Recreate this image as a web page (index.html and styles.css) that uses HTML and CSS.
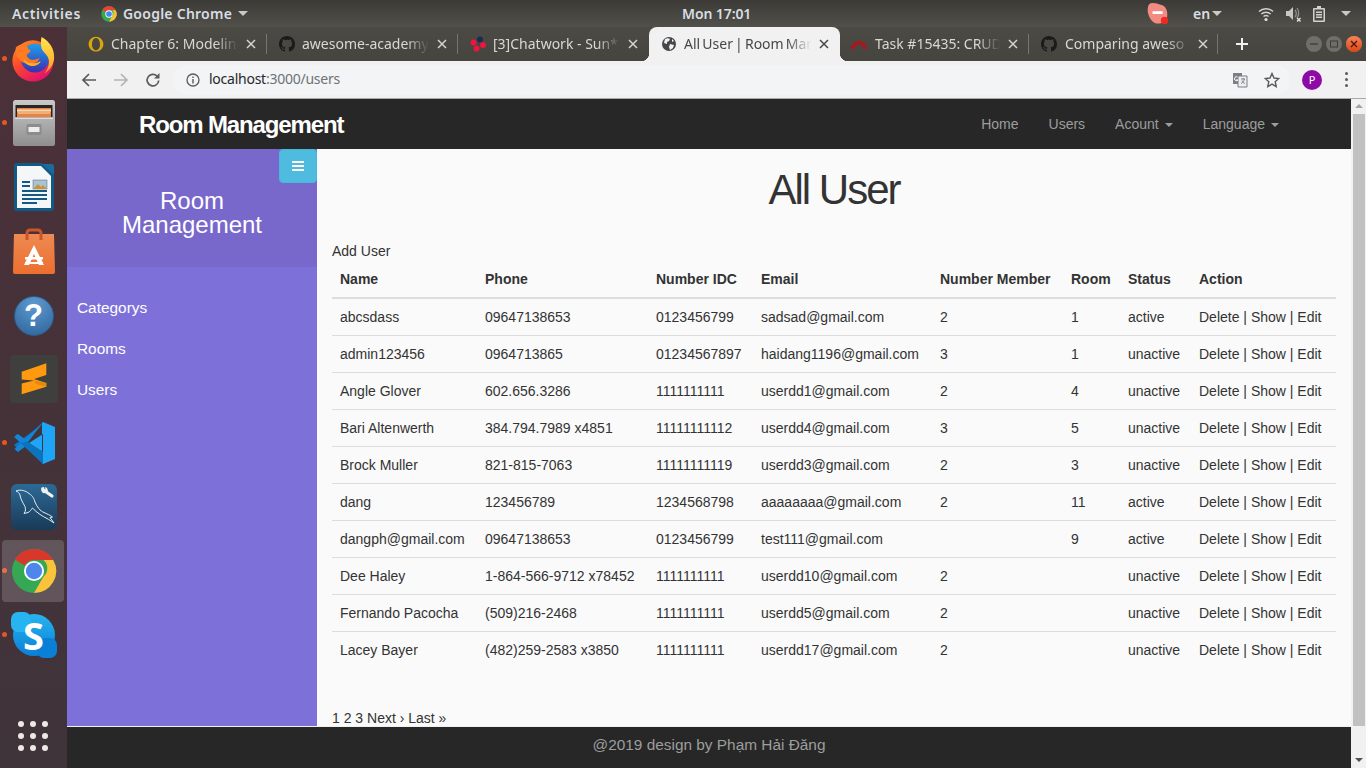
FILE: index.html
```html
<!DOCTYPE html>
<html lang="en">
<head>
<meta charset="utf-8">
<title>All User | Room Management</title>
<link rel="stylesheet" href="styles.css">
</head>
<body>
<svg class="defs" width="0" height="0" aria-hidden="true">
  <defs>
    <symbol id="gh" viewBox="0 0 16 16"><path fill="#1b1b1b" d="M8 0C3.58 0 0 3.58 0 8c0 3.54 2.29 6.53 5.47 7.59.4.07.55-.17.55-.38 0-.19-.01-.82-.01-1.49-2.01.37-2.53-.49-2.69-.94-.09-.23-.48-.94-.82-1.13-.28-.15-.68-.52-.01-.53.63-.01 1.08.58 1.23.82.72 1.21 1.87.87 2.33.66.07-.52.28-.87.51-1.07-1.78-.2-3.64-.89-3.64-3.95 0-.87.31-1.59.82-2.15-.08-.2-.36-1.02.08-2.12 0 0 .67-.21 2.2.82.64-.18 1.32-.27 2-.27.68 0 1.36.09 2 .27 1.53-1.04 2.2-.82 2.2-.82.44 1.1.16 1.92.08 2.12.51.56.82 1.27.82 2.15 0 3.07-1.87 3.75-3.65 3.95.29.25.54.73.54 1.48 0 1.07-.01 1.93-.01 2.2 0 .21.15.46.55.38A8.013 8.013 0 0016 8c0-4.42-3.58-8-8-8z"/></symbol>
    <symbol id="x" viewBox="0 0 10 10"><path d="M1 1l8 8M9 1l-8 8" stroke="currentColor" stroke-width="1.5" fill="none"/></symbol>
    <linearGradient id="ffo" x1="0" y1="0" x2="0.6" y2="1"><stop offset="0" stop-color="#ff9a1f"/><stop offset=".5" stop-color="#ff4a2a"/><stop offset="1" stop-color="#e3136c"/></linearGradient>
    <linearGradient id="ffy" x1="0" y1="0" x2="0" y2="1"><stop offset="0" stop-color="#ffe94f"/><stop offset="1" stop-color="#ff9a1f"/></linearGradient>
    <linearGradient id="ffb" x1="0" y1="0" x2="0" y2="1"><stop offset="0" stop-color="#1f9fe8"/><stop offset="1" stop-color="#3b2fb0"/></linearGradient>
    <linearGradient id="drw" x1="0" y1="0" x2="0" y2="1"><stop offset="0" stop-color="#c9c9c9"/><stop offset="1" stop-color="#8f8f8f"/></linearGradient>
    <linearGradient id="bag" x1="0" y1="0" x2="0" y2="1"><stop offset="0" stop-color="#ee8a52"/><stop offset="1" stop-color="#ec6f2f"/></linearGradient>
    <linearGradient id="wb" x1="0" y1="0" x2="0" y2="1"><stop offset="0" stop-color="#2c6a96"/><stop offset="1" stop-color="#1a3a58"/></linearGradient>
    <linearGradient id="cls" x1="0" y1="0" x2="0" y2="1"><stop offset="0" stop-color="#f9835a"/><stop offset="1" stop-color="#dd4514"/></linearGradient>
  </defs>
</svg>

<header class="topbar">
  <div class="tb-left">
    <span class="tb-item tb-act">Activities</span>
    <span class="tb-app">
      <svg class="tb-chrome" viewBox="0 0 48 48"><circle cx="24" cy="24" r="23" fill="#35a853"/><path d="M24 1a23 23 0 0 1 20 11.500H24a11.500 11.500 0 0 0-10 5.800L4 12A23 23 0 0 1 24 1z" fill="#ea4335"/><path d="M44 12.500a23 23 0 0 1-20 34.500l10-17.300a11.500 11.500 0 0 0 0-17.200z" fill="#fbc02d"/><circle cx="24" cy="24" r="11" fill="#fff"/><circle cx="24" cy="24" r="8.500" fill="#4285f4"/></svg>
      <span class="tb-item">Google Chrome</span>
      <i class="caret-w"></i>
    </span>
  </div>
  <div class="tb-clock">Mon 17:01</div>
  <div class="tb-right">
    <svg class="st-skype" viewBox="0 0 26 26"><path d="M6 1c4 0 6 1 9 2 5 1 7 6 7 10 0 5-1 9-7 10-4 1-8 0-10-3C2 16 0 11 1 6c0-3 2-5 5-5z" fill="#f28b82"/><rect x="6" y="10" width="11" height="3" fill="#fff"/><circle cx="19" cy="20" r="4" fill="#ee2a24"/></svg>
    <span class="st-lang">en</span><i class="caret-w st-caret1"></i>
    <svg class="st-ico st-wifi" viewBox="0 0 16 16"><path d="M1 5.500a10 10 0 0 1 14 0M3.300 8a7 7 0 0 1 9.400 0M5.500 10.500a4 4 0 0 1 5 0" stroke="#d3d2cf" stroke-width="1.500" fill="none"/><circle cx="8" cy="13.500" r="1.600" fill="#e4e3e0"/></svg>
    <svg class="st-ico st-vol" viewBox="0 0 16 16"><path d="M1 5h3l4-4v13l-4-4H1z" fill="#c8c7c4"/><path d="M10 4c1.500 2 1.500 5 0 7M12 2c2 3 2 7 0 10" stroke="#8f8e8a" stroke-width="1.300" fill="none"/><path d="M12 12l3.500 3.500M15.500 12L12 15.500" stroke="#e4e3e0" stroke-width="1.300"/></svg>
    <svg class="st-ico st-bat" viewBox="0 0 12 16"><path d="M4 0h4v2h3a1 1 0 0 1 1 1v12a1 1 0 0 1-1 1H1a1 1 0 0 1-1-1V3a1 1 0 0 1 1-1h3z" fill="#d3d2cf"/><path d="M1.500 3.500h9v11h-9z" fill="#4b4a44"/><path d="M3 5.500h6v1.500H3zM3 8h6v1.500H3zM3 10.500h6V12H3z" fill="#d3d2cf"/></svg>
    <i class="caret-w st-caret2"></i>
  </div>
</header>

<div class="desk">
  <nav class="dock">
    <div class="dock-item running">
      <svg class="d-ff" viewBox="0 0 48 48">
        <circle cx="24" cy="26" r="21.500" fill="url(#ffo)"/>
        <circle cx="26" cy="23" r="15" fill="url(#ffb)"/>
        <path d="M33 1c8 4 14 13 13 23-1 7-5 12-10 15 5-6 6-13 3-18-2-3-5-5-6-8-1-4-1-8 0-12z" fill="url(#ffy)"/>
        <path d="M6 12c3-3 8-4 11-2 2 1 1 4 3 4s2 3-1 4c-2 1-2 3 0 5 3 3 8 2 12 0-2 5-8 8-14 6-8-2-12-9-11-17z" fill="#ff7a22"/>
        <path d="M14 24c4 5 12 6 18 2-1 4-7 6-11 5-4-1-6-4-7-7z" fill="#ffb020"/>
      </svg>
    </div>
    <div class="dock-item running">
      <svg class="d-files" viewBox="0 0 42 46">
        <rect x="0" y="0" width="42" height="46" rx="2.500" fill="url(#drw)"/>
        <rect x="2.500" y="5" width="37" height="12" fill="#2a2523"/>
        <rect x="4" y="8" width="34" height="9" fill="#e8843e"/>
        <rect x="4" y="9.500" width="34" height="2" fill="#f6d9b8"/>
        <rect x="5" y="12.500" width="32" height="1" fill="#f6d9b8"/>
        <rect x="2" y="18" width="38" height="1" fill="#dcdcdc"/>
        <rect x="13.500" y="24" width="15" height="11" rx="1.500" fill="#8c8c8c"/>
        <rect x="15.500" y="27" width="11" height="5" fill="#eeeeee"/>
      </svg>
    </div>
    <div class="dock-item">
      <svg class="d-writer" viewBox="0 0 40 48">
        <path d="M2 0h26l12 12v33a3 3 0 0 1-3 3H3a3 3 0 0 1-3-3V2a2 2 0 0 1 2-2z" fill="#0f5a86"/>
        <path d="M3 3h24l10 10v32H3z" fill="#f4f6f8"/>
        <path d="M28 1h10a2 2 0 0 1 2 2v9z" fill="#1b6c9e"/>
        <path d="M8 18h8v2H8zM8 22h8v2H8zM8 27h25v2H8zM8 31h25v2H8zM8 35h25v2H8zM8 39h15v2H8z" fill="#125a85"/>
        <rect x="19" y="17" width="14" height="9" fill="#a8c2d6" stroke="#567" stroke-width=".5"/>
        <path d="M19 26l5-5 3 3 2-2 4 4z" fill="#c9962e"/>
      </svg>
    </div>
    <div class="dock-item">
      <svg class="d-bag" viewBox="0 0 42 46">
        <path d="M1 6h40l1 38a2 2 0 0 1-2 2H2a2 2 0 0 1-2-2z" fill="url(#bag)"/>
        <path d="M14 12V5a3 3 0 0 1 3-3h8a3 3 0 0 1 3 3v7" fill="none" stroke="#c9572a" stroke-width="3"/>
        <path d="M21 17l-10 20h5l5-11 5 11h5z" fill="#fff"/>
        <rect x="12" y="29" width="18" height="2.500" fill="#fff"/>
        <rect x="12" y="34" width="18" height="2" fill="#fff"/>
      </svg>
    </div>
    <div class="dock-item">
      <div class="d-help">?</div>
    </div>
    <div class="dock-item">
      <svg class="d-sublime" viewBox="0 0 48 48">
        <rect width="48" height="48" rx="4" fill="#3f3f3d"/>
        <path d="M11.700 16.700L36.300 8.300V20L24 24l12.300 4v3.700L11.700 39.300V28.500L24 25.500l-12.300-1z" fill="#ff9a10"/>
        <path d="M24 25.500l12.300 2.500v3.700L26 29z" fill="#e08a10"/>
      </svg>
    </div>
    <div class="dock-item running">
      <svg class="d-code" viewBox="0 0 42 42">
        <path d="M31 1L9 22l-5 4-3-3z" fill="#0b79c9"/>
        <path d="M1 15l3-3 27 30-2-1z" fill="#0b6cb5"/>
        <path d="M1.500 15L5 12l8 6-4 4zM1.500 27L5 30l8-6-4-4z" fill="#1685d4"/>
        <path d="M29 1l1-1 12 5v32l-12 5-1-1V1zM30 12L16 21l14 9z" fill="#1fa5f5" fill-rule="evenodd"/>
        <path d="M30 0l-1 1L9 20l4 3z" fill="#0f88d8"/>
        <path d="M30 30V42l-1-1L9 22l4-3z" fill="#0c74be"/>
      </svg>
    </div>
    <div class="dock-item">
      <svg class="d-wb" viewBox="0 0 46 46">
        <rect width="46" height="46" rx="6" fill="url(#wb)"/>
        <path d="M5 7C10 5 15 7 18 9.500 22 12 23 15 24 18c2 5 5 9 9 10.500 3 1.500 6 2.500 8.500 4.500l-2.500.5 4 5.500c-3-2-5-3.500-7-4.500-4-2-10-5.500-14.500-10.500-1.500 2-2.500 3.500-4.500 4.500l-4 1c2-2.500 1.500-4.500 1-7-2-3.500-4.500-7.500-5-11.500-.5-2-2-3-4-4z" fill="none" stroke="#e6edf2" stroke-width="1"/>
        <path d="M34.500 7.500l6.500 4.500" stroke="#f2f2f2" stroke-width="3.200" stroke-linecap="round"/>
        <path d="M30.500 3.500c-1 2 0 5 2.500 6l3-3.500-2.500-1-.5-2z" fill="#f2f2f2"/>
        <path d="M34 3l2 1 1 3-2 1z" fill="#f2f2f2"/>
      </svg>
    </div>
    <div class="dock-item running active">
      <svg class="d-chrome" viewBox="0 0 48 48"><circle cx="24" cy="24" r="23" fill="#35a853"/><path d="M24 1a23 23 0 0 1 20 11.500H24a11.500 11.500 0 0 0-10 5.800L4 12A23 23 0 0 1 24 1z" fill="#d8382c"/><path d="M44 12.500a23 23 0 0 1-20 34.500l10-17.300a11.500 11.500 0 0 0 0-17.200z" fill="#fbc33a"/><circle cx="24" cy="24" r="10.500" fill="#fff"/><circle cx="24" cy="24" r="8.500" fill="#4f86ec"/></svg>
    </div>
    <div class="dock-item running">
      <div class="d-skype"><span>S</span></div>
    </div>
    <div class="dock-grid">
      <i></i><i></i><i></i><i></i><i></i><i></i><i></i><i></i><i></i>
    </div>
  </nav>

  <div class="window">
    <div class="tabstrip">
      <div class="tab sep">
        <svg class="fav" viewBox="0 0 16 16"><path d="M8 .8C3.900.8.600 4.100.600 8.200s3.300 7.300 7.400 7.300 7.400-3.200 7.400-7.300S12.100.800 8 .8zm0 1.200c2.300 0 4 2.800 4 6.200s-1.700 6.100-4 6.100-4-2.700-4-6.100S5.700 2 8 2z" fill="#dba30c" fill-rule="evenodd"/></svg>
        <span class="tab-t">Chapter 6: Modeling</span>
        <svg class="tab-x"><use href="#x"/></svg>
      </div>
      <div class="tab sep">
        <svg class="fav"><use href="#gh"/></svg>
        <span class="tab-t">awesome-academy</span>
        <svg class="tab-x"><use href="#x"/></svg>
      </div>
      <div class="tab">
        <svg class="fav" viewBox="0 0 16 16"><circle cx="3.500" cy="6.500" r="3" fill="#f0143c"/><circle cx="10" cy="3.500" r="3" fill="#1d2b4f"/><circle cx="13" cy="9" r="3" fill="#f0143c"/><circle cx="6.500" cy="12.500" r="3" fill="#f0143c"/></svg>
        <span class="tab-t">[3]Chatwork - Sun*</span>
        <svg class="tab-x"><use href="#x"/></svg>
      </div>
      <div class="tab tab-on">
        <svg class="fav" viewBox="0 0 16 16"><circle cx="8" cy="8" r="7" fill="#45474a"/><path d="M4 3c2-1 4-1 5 0l-1 2-2 1v2L3 7zM9 8l4 1-1 3-3 2-1-3zM11 3l2 2-2 1z" fill="#f1f1f1"/></svg>
        <span class="tab-t tab-t-on">All User | Room Mar</span>
        <svg class="tab-x"><use href="#x"/></svg>
      </div>
      <div class="tab sep tab-five">
        <svg class="fav" viewBox="0 0 16 16"><path d="M1.800 13A6.200 6.200 0 0 1 14.200 13" fill="none" stroke="#c40a14" stroke-width="3.400" stroke-dasharray="3.500 .8"/></svg>
        <span class="tab-t">Task #15435: CRUD</span>
        <svg class="tab-x"><use href="#x"/></svg>
      </div>
      <div class="tab sep tab-six">
        <svg class="fav"><use href="#gh"/></svg>
        <span class="tab-t">Comparing aweso</span>
        <svg class="tab-x"><use href="#x"/></svg>
      </div>
      <svg class="tab-new" viewBox="0 0 12 12"><path d="M6 0v12M0 6h12" stroke="#f1f1f1" stroke-width="2"/></svg>
      <div class="winctl">
        <span class="wc"><svg viewBox="0 0 16 16"><path d="M4 8h8" stroke="#3c3b37" stroke-width="1.300"/></svg></span>
        <span class="wc"><svg viewBox="0 0 16 16"><rect x="4.500" y="5" width="7" height="6" fill="none" stroke="#3c3b37"/></svg></span>
        <span class="wc wc-close"><svg viewBox="0 0 16 16"><circle cx="8" cy="8" r="8" fill="url(#cls)"/><path d="M5 5l6 6M11 5l-6 6" stroke="#4a1a08" stroke-width="1.400"/></svg></span>
      </div>
    </div>

    <div class="toolbar">
      <svg class="tb-nav" viewBox="0 0 16 16"><path d="M15 8H2M8 2L2 8l6 6" fill="none" stroke="#5a5b5e" stroke-width="1.700"/></svg>
      <svg class="tb-nav" viewBox="0 0 16 16"><path d="M1 8h13M8 2l6 6-6 6" fill="none" stroke="#b3b4b6" stroke-width="1.700"/></svg>
      <svg class="tb-nav" viewBox="0 0 16 16"><path d="M13.700 8.500A5.800 5.800 0 1 1 12 4" fill="none" stroke="#5a5b5e" stroke-width="1.700"/><path d="M14.500 1v5.500H9z" fill="#5a5b5e"/></svg>
      <div class="omni">
        <svg class="om-info" viewBox="0 0 14 14"><circle cx="7" cy="7" r="6" fill="none" stroke="#5a5b5e" stroke-width="1.300"/><path d="M7 6v4.500M7 3.500v1.500" stroke="#5a5b5e" stroke-width="1.400"/></svg>
        <span class="url">localhost<span class="url-dim">:3000/users</span></span>
        <svg class="om-tr" viewBox="0 0 16 16"><path d="M1 1h9v11H1z" fill="#7c7f83"/><path d="M6 4h9v11H6z" fill="#eceeef" stroke="#7c7f83"/><path d="M5.500 5a2 2 0 1 0 .5 3H4" stroke="#fff" fill="none"/><path d="M9 7h4M11 6v1M12.500 7c-.5 2-2 4-3.500 4.500M10 8.500c.5 1.500 2 3 3 3" stroke="#6b6e72" fill="none" stroke-width=".8"/></svg>
        <svg class="om-star" viewBox="0 0 16 16"><path d="M8 1.500l2 4.500 4.800.5-3.600 3.200 1 4.800L8 12.100l-4.200 2.400 1-4.800L1.200 6.500 6 6z" fill="none" stroke="#5a5b5e" stroke-width="1.400"/></svg>
      </div>
      <span class="avatar">P</span>
      <span class="kebab"><i></i><i></i><i></i></span>
    </div>

    <div class="viewport">
      <div class="page">
        <div class="navbar">
          <a class="brand">Room Management</a>
          <ul class="nav">
            <li>Home</li>
            <li>Users</li>
            <li>Acount<i class="caret"></i></li>
            <li>Language<i class="caret"></i></li>
          </ul>
        </div>
        <div class="wrap">
          <aside class="sidebar">
            <div class="side-head">
              <h3>Room Management</h3>
              <button class="toggle" type="button" aria-label="Menu"><i></i><i></i><i></i></button>
            </div>
            <ul class="side-menu">
              <li>Categorys</li>
              <li>Rooms</li>
              <li>Users</li>
            </ul>
          </aside>
          <main class="content">
            <h1>All User</h1>
            <div class="add">Add User</div>
            <table class="table">
              <colgroup>
                <col class="c-name"><col class="c-phone"><col class="c-idc"><col class="c-email"><col class="c-member"><col class="c-room"><col class="c-status"><col class="c-action">
              </colgroup>
              <thead>
                <tr><th>Name</th><th>Phone</th><th>Number IDC</th><th>Email</th><th>Number Member</th><th>Room</th><th>Status</th><th>Action</th></tr>
              </thead>
              <tbody>
                <tr><td>abcsdass</td><td>09647138653</td><td>0123456799</td><td>sadsad@gmail.com</td><td>2</td><td>1</td><td>active</td><td>Delete | Show | Edit</td></tr>
                <tr><td>admin123456</td><td>0964713865</td><td>01234567897</td><td>haidang1196@gmail.com</td><td>3</td><td>1</td><td>unactive</td><td>Delete | Show | Edit</td></tr>
                <tr><td>Angle Glover</td><td>602.656.3286</td><td>1111111111</td><td>userdd1@gmail.com</td><td>2</td><td>4</td><td>unactive</td><td>Delete | Show | Edit</td></tr>
                <tr><td>Bari Altenwerth</td><td>384.794.7989 x4851</td><td>11111111112</td><td>userdd4@gmail.com</td><td>3</td><td>5</td><td>unactive</td><td>Delete | Show | Edit</td></tr>
                <tr><td>Brock Muller</td><td>821-815-7063</td><td>11111111119</td><td>userdd3@gmail.com</td><td>2</td><td>3</td><td>unactive</td><td>Delete | Show | Edit</td></tr>
                <tr><td>dang</td><td>123456789</td><td>1234568798</td><td>aaaaaaaa@gmail.com</td><td>2</td><td>11</td><td>active</td><td>Delete | Show | Edit</td></tr>
                <tr><td>dangph@gmail.com</td><td>09647138653</td><td>0123456799</td><td>test111@gmail.com</td><td></td><td>9</td><td>active</td><td>Delete | Show | Edit</td></tr>
                <tr><td>Dee Haley</td><td>1-864-566-9712 x78452</td><td>1111111111</td><td>userdd10@gmail.com</td><td>2</td><td></td><td>unactive</td><td>Delete | Show | Edit</td></tr>
                <tr><td>Fernando Pacocha</td><td>(509)216-2468</td><td>1111111111</td><td>userdd5@gmail.com</td><td>2</td><td></td><td>unactive</td><td>Delete | Show | Edit</td></tr>
                <tr><td>Lacey Bayer</td><td>(482)259-2583 x3850</td><td>1111111111</td><td>userdd17@gmail.com</td><td>2</td><td></td><td>unactive</td><td>Delete | Show | Edit</td></tr>
              </tbody>
            </table>
            <div class="pager">1 2 3 Next › Last »</div>
          </main>
        </div>
        <footer class="footer">@2019 design by Phạm Hải Đăng</footer>
      </div>
      <div class="scrollbar">
        <i class="sb-up"></i>
        <div class="sb-thumb"></div>
        <i class="sb-down"></i>
      </div>
    </div>
  </div>
</div>
</body>
</html>
```

FILE: styles.css
```css
* { box-sizing: border-box; }
html, body { margin: 0; height: 100%; overflow: hidden; }
body {
  display: flex;
  flex-direction: column;
  width: 1366px;
  height: 768px;
  font-family: "Liberation Sans", Arial, sans-serif;
  font-size: 14px;
  line-height: 20px;
  color: #333;
  background: #4a3138;
}
.defs { position: absolute; }

/* GNOME top bar */
.topbar {
  flex: 0 0 27px;
  display: grid;
  grid-template-columns: 682px 69px minmax(0, 1fr);
  align-items: center;
  background: linear-gradient(#3b3a36, #52504a);
  color: #d8dee4;
  font-family: "Noto Sans", sans-serif;
  font-size: 14px;
  font-weight: 600;
}
.tb-left { display: flex; align-items: center; padding-left: 12px; gap: 20px; }
.tb-app { display: flex; align-items: center; gap: 6px; }
.tb-chrome { width: 16px; height: 16px; }
.tb-item { letter-spacing: .25px; }
.tb-act { letter-spacing: .65px; }
.tb-clock { white-space: nowrap; letter-spacing: -.1px; }
.tb-right { display: flex; align-items: center; padding-left: 396px; height: 27px; }
.st-skype { width: 24px; height: 24px; margin-right: 22px; }
.st-lang { width: 17px; }
.caret-w {
  display: inline-block;
  width: 0; height: 0;
  border-left: 5px solid transparent;
  border-right: 5px solid transparent;
  border-top: 5px solid #c9c9c6;
}
.st-caret1 { margin-left: 2px; margin-right: 36px; }
.st-ico { width: 16px; height: 16px; }
.st-wifi { margin-right: 11px; }
.st-vol { margin-right: 12px; }
.st-bat { width: 12px; margin-right: 16px; }

/* desktop */
.desk { flex: 1; display: flex; min-height: 0; }

/* dock */
.dock {
  flex: 0 0 67px;
  display: flex;
  flex-direction: column;
  background: linear-gradient(#4c3038, #3f343a);
}
.dock-item {
  position: relative;
  flex: 0 0 64px;
  display: flex;
  align-items: center;
  justify-content: center;
  width: 67px;
}
.dock-item.running::before {
  content: "";
  position: absolute;
  left: 2px;
  top: 29px;
  width: 5px;
  height: 5px;
  border-radius: 50%;
  background: #e95420;
}
.dock-item.active::after {
  content: "";
  position: absolute;
  z-index: 0;
  left: 2px;
  top: 1px;
  width: 62px;
  height: 62px;
  border-radius: 4px;
  background: rgba(255, 255, 255, .17);
}
.dock-item svg, .dock-item div { position: relative; z-index: 1; }
.d-ff { width: 46px; height: 48px; margin-left: -1px; }
.d-files { width: 42px; height: 46px; }
.d-writer { width: 40px; height: 48px; }
.d-bag { width: 42px; height: 46px; }
.d-help {
  width: 40px;
  height: 40px;
  margin-top: 2px;
  border-radius: 50%;
  border: 1px solid #2a5c8c;
  background: radial-gradient(circle at 50% 20%, #5e9ad0, #2c6399);
  color: #fff;
  font: bold 31px/38px "Liberation Sans", sans-serif;
  text-align: center;
}
.d-sublime { width: 48px; height: 48px; }
.d-code { width: 42px; height: 42px; }
.d-wb { width: 46px; height: 46px; }
.d-chrome { width: 46px; height: 46px; }
.d-skype {
  width: 42px;
  height: 42px;
  border-radius: 50%;
  background: linear-gradient(#27b4f0, #0a7fd6);
  color: #fff;
  font: bold 38px/42px "Open Sans", sans-serif;
  text-align: center;
}
.d-skype span { position: relative; z-index: 1; }
.d-skype::before, .d-skype::after {
  content: "";
  position: absolute;
  width: 20px;
  height: 20px;
  border-radius: 7px;
}
.d-skype::before { left: -2px; top: -2px; background: #27b4f0; }
.d-skype::after { right: -2px; bottom: -2px; background: #0a7fd6; }
.dock-grid {
  margin-top: auto;
  margin-bottom: 17px;
  margin-left: 18px;
  width: 30px;
  display: grid;
  grid-template-columns: repeat(3, 6px);
  gap: 6px;
}
.dock-grid i { width: 6px; height: 6px; border-radius: 50%; background: #ece9e6; }

/* chrome window */
.window { flex: 1; display: flex; flex-direction: column; min-width: 0; }
.tabstrip {
  flex: 0 0 34px;
  display: flex;
  align-items: center;
  padding-left: 9px;
  background: linear-gradient(#4c4a44, #46443e);
  font-family: "Noto Sans", sans-serif;
  font-size: 14px;
  color: #d9d8d4;
}
.tab {
  position: relative;
  flex: 0 0 191px;
  height: 34px;
  display: flex;
  align-items: center;
  padding-left: 12px;
}
.tab.sep::after {
  content: "";
  position: absolute;
  right: 0;
  top: 7px;
  width: 1px;
  height: 20px;
  background: #77756f;
}
.fav { width: 16px; height: 16px; flex: none; }
.tab-t {
  flex: none;
  width: 130px;
  margin-left: 7px;
  overflow: hidden;
  white-space: nowrap;
  -webkit-mask-image: linear-gradient(90deg, #000 80%, transparent 98%);
  mask-image: linear-gradient(90deg, #000 80%, transparent 98%);
}
.tab-x { width: 10px; height: 10px; margin-left: 5px; color: #d6d5d1; flex: none; }
.tab-five { flex-basis: 190px; margin-left: -1px; }
.tab-six { flex-basis: 189px; }
.tab-five .tab-t, .tab-six .tab-t { width: 128px; margin-left: 8px; }
.tab-on {
  background: #f1f1f1;
  color: #45474a;
  border-radius: 8px 8px 0 0;
}
.tab-t-on { word-spacing: -1.5px; }
.tab-on .tab-x { color: #45474a; }
.tab-on::before, .tab-on::after {
  content: "";
  position: absolute;
  bottom: 0;
  width: 8px;
  height: 8px;
}
.tab-on::before { left: -8px; background: radial-gradient(circle at 0 0, transparent 8px, #f1f1f1 8.5px); }
.tab-on::after { right: -8px; background: radial-gradient(circle at 100% 0, transparent 8px, #f1f1f1 8.5px); }
.tab-new { width: 12px; height: 12px; margin-left: 18px; }
.winctl { margin-left: auto; margin-right: 4px; display: flex; gap: 4px; }
.wc {
  width: 16px;
  height: 16px;
  border-radius: 50%;
  background: #6f6e69;
  display: block;
}
.wc svg { display: block; width: 16px; height: 16px; }

.toolbar {
  flex: 0 0 38px;
  display: flex;
  align-items: center;
  padding-left: 14px;
  background: #f1f1f1;
  border-bottom: 1px solid #a9a9a9;
}
.tb-nav { width: 16px; height: 16px; margin-right: 16px; }
.omni {
  flex: 0 0 1118px;
  height: 30px;
  margin-left: -5px;
  display: flex;
  align-items: center;
  padding: 0 10px 0 14px;
  border-radius: 15px;
  background: #f2f4f5;
}
.om-info { width: 14px; height: 14px; }
.url { margin-left: 9px; margin-top: -2px; font-family: "Noto Sans", sans-serif; font-size: 14px; color: #26282b; letter-spacing: -.25px; }
.url-dim { color: #6f7276; }
.om-tr { width: 16px; height: 16px; margin-left: auto; }
.om-star { width: 16px; height: 16px; margin-left: 16px; }
.avatar {
  width: 20px;
  height: 20px;
  margin-left: 12px;
  border-radius: 50%;
  background: #8e0aa6;
  color: #fff;
  font: 11px/20px "Noto Sans", sans-serif;
  text-align: center;
}
.kebab { display: flex; flex-direction: column; gap: 3px; margin-left: 23px; }
.kebab i { width: 3px; height: 3px; border-radius: 50%; background: #5a5b5e; }

/* web page */
.viewport { flex: 1; display: flex; min-height: 0; }
.page { flex: 1; display: flex; flex-direction: column; min-width: 0; background: #fafafa; }

.navbar {
  flex: 0 0 50px;
  display: flex;
  align-items: center;
  padding: 0 57px 0 72px;
  background: #272727;
}
.brand {
  margin-top: 2px;
  color: #fff;
  font-size: 24px;
  font-weight: bold;
  letter-spacing: -1.13px;
}
.nav {
  margin: 0 0 0 auto;
  padding: 0;
  list-style: none;
  display: flex;
  color: #9d9d9d;
}
.nav li { padding: 0 15px; }
.caret {
  display: inline-block;
  margin-left: 6px;
  vertical-align: middle;
  border-left: 4px solid transparent;
  border-right: 4px solid transparent;
  border-top: 4px solid #9d9d9d;
}

.wrap { flex: 1; display: flex; min-height: 0; }
.sidebar { flex: 0 0 250px; background: #7d71d9; color: #fff; }
.side-head {
  position: relative;
  height: 118px;
  padding: 40px 20px 0;
  background: #7868cc;
  text-align: center;
}
.side-head h3 { margin: 0; font-size: 24px; font-weight: 400; line-height: 24px; }
.toggle {
  position: absolute;
  top: 0;
  right: 0;
  width: 38px;
  height: 34px;
  padding: 0;
  display: flex;
  flex-direction: column;
  align-items: center;
  justify-content: center;
  gap: 2px;
  background: #4fbcdf;
  border: 1px solid #46b8da;
  border-radius: 4px;
}
.toggle i { width: 12px; height: 2px; background: #fff; }
.side-menu { margin: 0; padding: 20px 0; list-style: none; }
.side-menu li { padding: 10px; font-size: 15.4px; line-height: 21px; }

.content { flex: 1; min-width: 0; padding: 18px 15px 0; }
.content h1 {
  margin: 0 0 28px;
  font-size: 42px;
  font-weight: 400;
  line-height: 46px;
  letter-spacing: -2px;
  text-align: center;
}
.add { height: 20px; }
.table { width: 100%; table-layout: fixed; border-collapse: collapse; border-spacing: 0; }
.c-name { width: 145px; }
.c-phone { width: 171px; }
.c-idc { width: 105px; }
.c-email { width: 179px; }
.c-member { width: 131px; }
.c-room { width: 57px; }
.c-status { width: 71px; }
.c-action { width: 145px; }
.table th, .table td { padding: 8px; text-align: left; vertical-align: top; white-space: nowrap; }
.table th { border-bottom: 2px solid #ddd; font-weight: bold; }
.table td { border-top: 1px solid #ddd; line-height: 20px; }
.table tbody tr:first-child td { border-top: 0; }
.pager { margin-top: 40px; }

.footer {
  flex: 0 0 42px;
  border-top: 1px solid #f0f0f0;
  background: #272727;
  color: #9d9d9d;
  font-size: 15.4px;
  line-height: 36px;
  text-align: center;
}

.scrollbar {
  flex: 0 0 15px;
  display: flex;
  flex-direction: column;
  align-items: center;
  background: #f1f1f1;
}
.sb-up { margin-top: 5px; border-left: 4px solid transparent; border-right: 4px solid transparent; border-bottom: 4px solid #a3a3a3; }
.sb-thumb { width: 12px; height: 612px; margin-top: 6px; margin-left: 1px; background: #c1c1c1; }
.sb-down { margin-top: auto; margin-bottom: 6px; border-left: 4px solid transparent; border-right: 4px solid transparent; border-top: 4px solid #505050; }
```
